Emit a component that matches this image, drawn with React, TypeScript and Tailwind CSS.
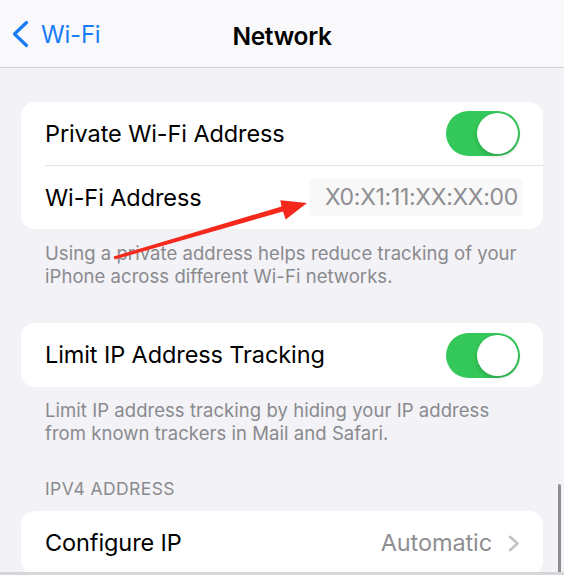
import React from "react";

function Toggle() {
  return (
    <div className="relative h-[45px] w-[74px] shrink-0 rounded-full bg-[#34c759]">
      <div className="absolute right-[2px] top-[2px] h-[41px] w-[41px] rounded-full bg-white shadow-[0_2px_4px_rgba(0,0,0,0.18)]" />
    </div>
  );
}

function Footer({ children }: { children: React.ReactNode }) {
  return (
    <p className="px-[45px] text-[18.5px] leading-[22.5px] tracking-[0.05px] text-[#8a8a8e]">
      {children}
    </p>
  );
}

export default function App() {
  return (
    <div className="relative h-[575px] w-[564px] overflow-hidden border-b-[3px] border-[#d6d6d8] bg-[#f2f2f7] font-['Inter','Noto_Sans',sans-serif] text-black antialiased">
      {/* Nav bar */}
      <header className="relative flex h-[68px] items-center border-b border-[#d3d3d7] bg-[#f9f9fb]">
        <div className="flex items-center gap-[12px] pl-[11px] text-[#1a7cf5]">
          <svg width="18" height="28" viewBox="0 0 18 28" fill="none">
            <path
              d="M15.5 2.5 L3.5 14 L15.5 25.5"
              stroke="currentColor"
              strokeWidth="3.2"
              strokeLinecap="round"
              strokeLinejoin="round"
            />
          </svg>
          <span className="pt-[2px] text-[24px] leading-none tracking-[-0.2px]">Wi-Fi</span>
        </div>
        <h1 className="absolute left-1/2 top-[24px] -translate-x-1/2 text-[24.5px] font-semibold leading-none tracking-[-0.3px]">
          Network
        </h1>
      </header>

      <main className="pt-[34px]">
        {/* Private address */}
        <section className="mx-[21px] overflow-hidden rounded-[14px] bg-white">
          <div className="ml-[24px] flex h-[64px] items-center justify-between border-b border-[#e3e3e6] pr-[23px]">
            <span className="text-[23.5px] tracking-[-0.1px]">Private Wi-Fi Address</span>
            <Toggle />
          </div>
          <div className="flex h-[63px] items-center justify-between pl-[24px] pr-[21px]">
            <span className="text-[23.5px] tracking-[-0.1px]">Wi-Fi Address</span>
            <span className="bg-[#f8f8f9] py-[1px] pl-[15px] pr-[4px] text-[23px] tracking-[-0.3px] text-[#8e8e93]">
              X0:X1:11:XX:XX:00
            </span>
          </div>
        </section>
        <div className="pt-[13px]">
          <Footer>
            Using a private address helps reduce tracking of your
            <br />
            iPhone across different Wi-Fi networks.
          </Footer>
        </div>

        {/* Limit IP tracking */}
        <section className="mx-[21px] mt-[36px] flex h-[64px] items-center justify-between rounded-[14px] bg-white pl-[24px] pr-[23px]">
          <span className="text-[23.5px] tracking-[-0.1px]">Limit IP Address Tracking</span>
          <Toggle />
        </section>
        <div className="pt-[12px]">
          <Footer>
            Limit IP address tracking by hiding your IP address
            <br />
            from known trackers in Mail and Safari.
          </Footer>
        </div>

        {/* IPv4 */}
        <h2 className="mt-[34px] px-[45px] text-[17.5px] leading-[22px] tracking-[0.4px] text-[#8a8a8e]">IPV4 ADDRESS</h2>
        <section className="mx-[21px] mt-[11px] rounded-[14px] bg-white">
          <div className="flex h-[64px] items-center justify-between pl-[24px] pr-[23px]">
            <span className="text-[23.5px] tracking-[-0.1px]">Configure IP</span>
            <div className="flex items-center gap-[16px]">
              <span className="text-[23.5px] tracking-[-0.1px] text-[#8e8e93]">Automatic</span>
              <svg width="12" height="17" viewBox="0 0 12 17" fill="none">
                <path
                  d="M2 1.8 L9.5 8.5 L2 15.2"
                  stroke="#c4c4c7"
                  strokeWidth="2.6"
                  strokeLinecap="round"
                  strokeLinejoin="round"
                />
              </svg>
            </div>
          </div>
        </section>
      </main>

      {/* Scroll indicator */}
      <div className="absolute right-[3px] top-[484px] h-[90px] w-[3px] rounded-full bg-[#8e8e93]" />

      {/* Annotation arrow */}
      <svg className="pointer-events-none absolute left-0 top-0" width="564" height="575" viewBox="0 0 564 575">
        <polygon
          points="114.6,259.5 113.6,256.5 281.5,206.5 280.3,200.3 307,203 285.7,219.5 283,211.5"
          fill="#f5281c"
        />
      </svg>
    </div>
  );
}
